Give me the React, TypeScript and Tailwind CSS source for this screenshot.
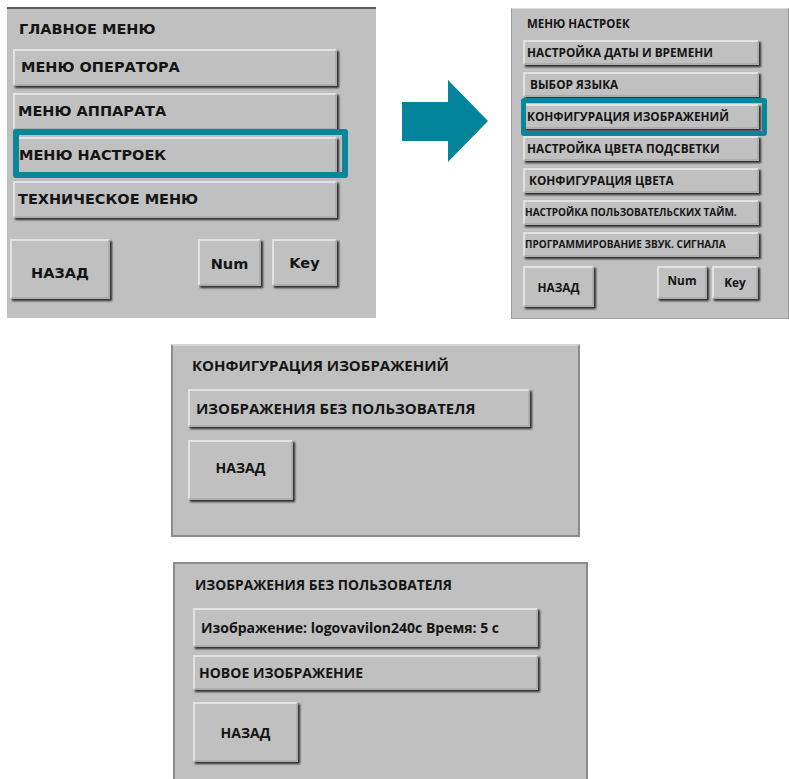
import React from "react";

const tahoma = { fontFamily: '"DejaVu Sans", "Liberation Sans", sans-serif' };
const calibri = { fontFamily: '"Open Sans", "Noto Sans", sans-serif' };

function Btn({
  className = "",
  children,
  style,
}: {
  className?: string;
  children?: React.ReactNode;
  style?: React.CSSProperties;
}) {
  return (
    <div
      style={style}
      className={
        "flex items-center bg-[#c0c0c0] border-2 border-t-[#e2e2e2] border-l-[#e2e2e2] border-r-[#adadad] border-b-[#adadad] shadow-[2px_2px_2px_#2b2b2b] font-bold text-[#141414] whitespace-nowrap " +
        className
      }
    >
      {children}
    </div>
  );
}

export default function App() {
  return (
    <div className="w-[789px] h-[779px] bg-white overflow-hidden">
      {/* top row */}
      <div className="flex items-start pt-[7px] pl-[7px]">
        {/* Panel 1 */}
        <div
          style={tahoma}
          className="w-[369px] h-[311px] bg-[#c0c0c0] border-t-2 border-[#5c5c5c] flex flex-col pl-[6px] pr-[39px]"
        >
          <div className="h-[40px] pl-[6px] pt-[13px] text-[14.5px] font-bold text-[#141414] leading-none">
            ГЛАВНОЕ МЕНЮ
          </div>
          <div className="flex flex-col gap-[7px]">
            <Btn className="h-[37px] pl-[6px] text-[14.5px]">МЕНЮ ОПЕРАТОРА</Btn>
            <Btn className="h-[37px] pl-[3px] text-[14.5px]">МЕНЮ АППАРАТА</Btn>
            <div className="relative">
              <Btn className="h-[37px] pl-[4px] text-[14.5px]">МЕНЮ НАСТРОЕК</Btn>
              <div className="absolute -top-[8px] left-0 -right-[11px] -bottom-[4px] border-[6px] border-[#0b8699] rounded-[3px]" />
            </div>
            <Btn className="h-[37px] pl-[3px] text-[14.5px]">ТЕХНИЧЕСКОЕ МЕНЮ</Btn>
          </div>
          <div className="flex items-start mt-[21px] -ml-[3px]">
            <Btn className="w-[100px] h-[60px] justify-center text-[14.5px]">
              <span className="mt-[10px]">НАЗАД</span>
            </Btn>
            <Btn className="ml-[88px] w-[63px] h-[47px] justify-center text-[14.5px]">
              <span className="mt-[5px]">Num</span>
            </Btn>
            <Btn className="ml-[11px] w-[65px] h-[47px] justify-center text-[14.5px]">
              <span className="mt-[2px]">Key</span>
            </Btn>
          </div>
        </div>

        {/* Arrow */}
        <div className="ml-[26px] mt-[73px]">
          <svg width="86" height="82" viewBox="0 0 86 82">
            <polygon points="0,22 46,22 46,0 86,41 46,82 46,61 0,61" fill="#02849a" />
          </svg>
        </div>

        {/* Panel 2 */}
        <div
          style={calibri}
          className="ml-[23px] mt-[1px] w-[278px] h-[311px] bg-[#c0c0c0] border border-[#9c9c9c] border-t-[#d8d8d8] flex flex-col pl-[11px]"
        >
          <div className="h-[31px] pl-[4px] pt-[9px] text-[11.5px] font-bold text-[#141414] leading-none">
            МЕНЮ НАСТРОЕК
          </div>
          <div className="flex flex-col gap-[7px] w-[236px]">
            <Btn className="h-[25px] pl-[2px] text-[11.8px]">НАСТРОЙКА ДАТЫ И ВРЕМЕНИ</Btn>
            <Btn className="h-[25px] pl-[5px] text-[11.8px]">ВЫБОР ЯЗЫКА</Btn>
            <div className="relative">
              <Btn className="h-[25px] pl-[2px] text-[11.8px]">КОНФИГУРАЦИЯ ИЗОБРАЖЕНИЙ</Btn>
              <div className="absolute -top-[6px] -left-[2px] -right-[8px] -bottom-[7px] border-[5px] border-[#0b8699] rounded-[3px]" />
            </div>
            <Btn className="h-[25px] pl-[2px] text-[11.8px]">НАСТРОЙКА ЦВЕТА ПОДСВЕТКИ</Btn>
            <Btn className="h-[25px] pl-[4px] text-[11.8px]">КОНФИГУРАЦИЯ ЦВЕТА</Btn>
            <Btn className="h-[25px] pl-[0px] text-[10px]">НАСТРОЙКА ПОЛЬЗОВАТЕЛЬСКИХ ТАЙМ.</Btn>
            <Btn className="h-[25px] pl-[0px] text-[10px]">ПРОГРАММИРОВАНИЕ ЗВУК. СИГНАЛА</Btn>
          </div>
          <div className="flex items-start mt-[9px]">
            <Btn className="w-[71px] h-[41px] justify-center text-[11.8px]">
              <span className="mt-[2px]">НАЗАД</span>
            </Btn>
            <Btn className="ml-[63px] w-[50px] h-[33px] justify-center text-[11.8px]">
              <span className="-mt-[3px]">Num</span>
            </Btn>
            <Btn className="ml-[5px] w-[46px] h-[33px] justify-center text-[11.8px]">
              <span>Key</span>
            </Btn>
          </div>
        </div>
      </div>

      {/* Panel 3 */}
      <div
        style={calibri}
        className="ml-[171px] mt-[25px] w-[409px] h-[193px] bg-[#c0c0c0] border-2 border-[#8c8c8c] border-t-[#d4d4d4] flex flex-col pl-[15px]"
      >
        <div className="h-[43px] pl-[4px] pt-[12px] text-[15px] font-bold text-[#141414] leading-none">
          КОНФИГУРАЦИЯ ИЗОБРАЖЕНИЙ
        </div>
        <Btn className="w-[342px] h-[38px] pl-[6px] text-[15px]">ИЗОБРАЖЕНИЯ БЕЗ ПОЛЬЗОВАТЕЛЯ</Btn>
        <Btn className="mt-[13px] w-[105px] h-[60px] justify-center text-[14px]">
          <span className="-mt-[6px]">НАЗАД</span>
        </Btn>
      </div>

      {/* Panel 4 */}
      <div
        style={calibri}
        className="ml-[173px] mt-[25px] w-[415px] h-[230px] bg-[#c0c0c0] border-2 border-[#8c8c8c] flex flex-col pl-[18px]"
      >
        <div className="h-[44px] pl-[2px] pt-[14px] text-[13.8px] font-bold text-[#141414] leading-none">
          ИЗОБРАЖЕНИЯ БЕЗ ПОЛЬЗОВАТЕЛЯ
        </div>
        <Btn className="w-[345px] h-[39px] pl-[6px] text-[14px]">
          Изображение: logovavilon240c Время: 5 с
        </Btn>
        <Btn className="mt-[8px] w-[345px] h-[35px] pl-[4px] text-[14px]">НОВОЕ ИЗОБРАЖЕНИЕ</Btn>
        <Btn className="mt-[12px] w-[105px] h-[60px] justify-center text-[14px]">
          <span>НАЗАД</span>
        </Btn>
      </div>
    </div>
  );
}
